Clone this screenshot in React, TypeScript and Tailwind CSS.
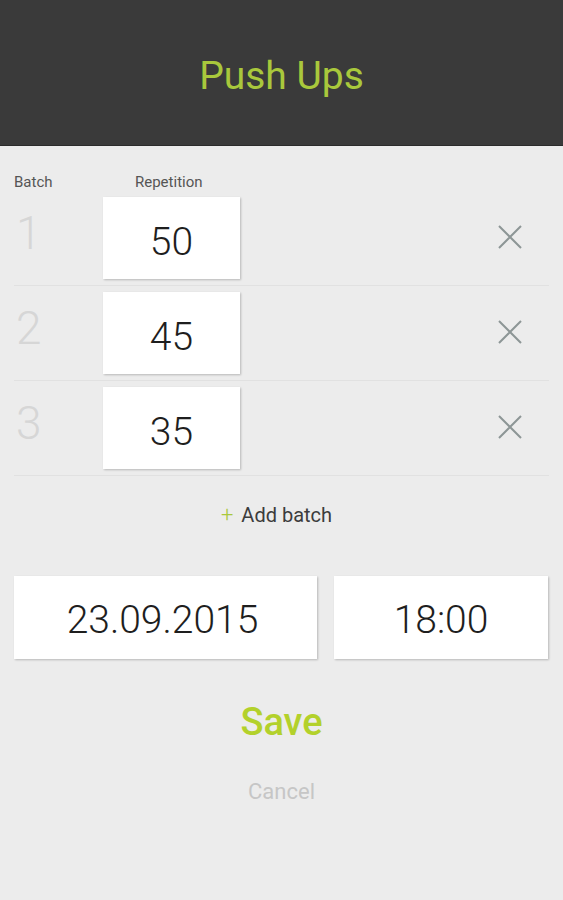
import React from "react";

const batches = [
  { n: 1, reps: 50 },
  { n: 2, reps: 45 },
  { n: 3, reps: 35 },
];

const CloseIcon = () => (
  <svg width="24" height="24" viewBox="0 0 24 24" className="text-[#8d9696]">
    <path d="M1 1L23 23M23 1L1 23" stroke="currentColor" strokeWidth="2" fill="none" />
  </svg>
);

const App = () => {
  return (
    <div className="min-h-[900px] bg-[#ececec] font-['Roboto',sans-serif]">
      <header className="h-[146px] bg-[#3a3a3a] flex items-center justify-center border-b border-[#2b2b2b]">
        <h1 className="text-[39px] leading-none text-[#a9c83c] mt-[7px]">Push Ups</h1>
      </header>

      <section className="px-[14px]">
        <div className="flex h-[45px] mb-[6px] items-end text-[15px] leading-[18px] text-[#555]">
          <span className="w-[121px]">Batch</span>
          <span>Repetition</span>
        </div>

        {batches.map((b, i) => (
          <div
            key={b.n}
            className={
              "flex items-center border-b border-[#e1e1e1] pb-[6px] " + (i === 0 ? "pt-0" : "pt-[6px]")
            }
          >
            <div className="w-[89px] pl-[2px] mb-[10px] text-[46px] font-light leading-none text-[#d6d6d6]">
              {b.n}
            </div>
            <div className="w-[137px] h-[82px] bg-white shadow-[1px_1px_2px_rgba(0,0,0,0.22)] flex items-center justify-center text-[39px] font-light text-[#1e1e1e] pt-[8px]">
              {b.reps}
            </div>
            <div className="ml-auto mr-[27px] mb-[2px]">
              <CloseIcon />
            </div>
          </div>
        ))}

        <div className="mt-[27px] flex justify-center items-center text-[20px] leading-[24px] text-[#3c3c3c] pr-[10px]">
          <span className="text-[#a9c83c] text-[22px] font-light mr-[8px]">+</span>
          <span>Add batch</span>
        </div>

        <div className="mt-[49px] flex gap-[17px]">
          <div className="w-[303px] h-[83px] bg-white shadow-[1px_1px_2px_rgba(0,0,0,0.22)] flex items-center justify-center text-[39px] font-light text-[#1e1e1e] pr-[6px] pt-[6px]">
            23.09.2015
          </div>
          <div className="w-[214px] h-[83px] bg-white shadow-[1px_1px_2px_rgba(0,0,0,0.22)] flex items-center justify-center text-[39px] font-light text-[#1e1e1e] pt-[6px]">
            18:00
          </div>
        </div>

        <div className="mt-[41px] text-center text-[38px] leading-[44px] font-medium text-[#b3d12b]">Save</div>
        <div className="mt-[35px] text-center text-[22px] leading-[26px] text-[#c6c6c6]">Cancel</div>
      </section>
    </div>
  );
};

export default App;
